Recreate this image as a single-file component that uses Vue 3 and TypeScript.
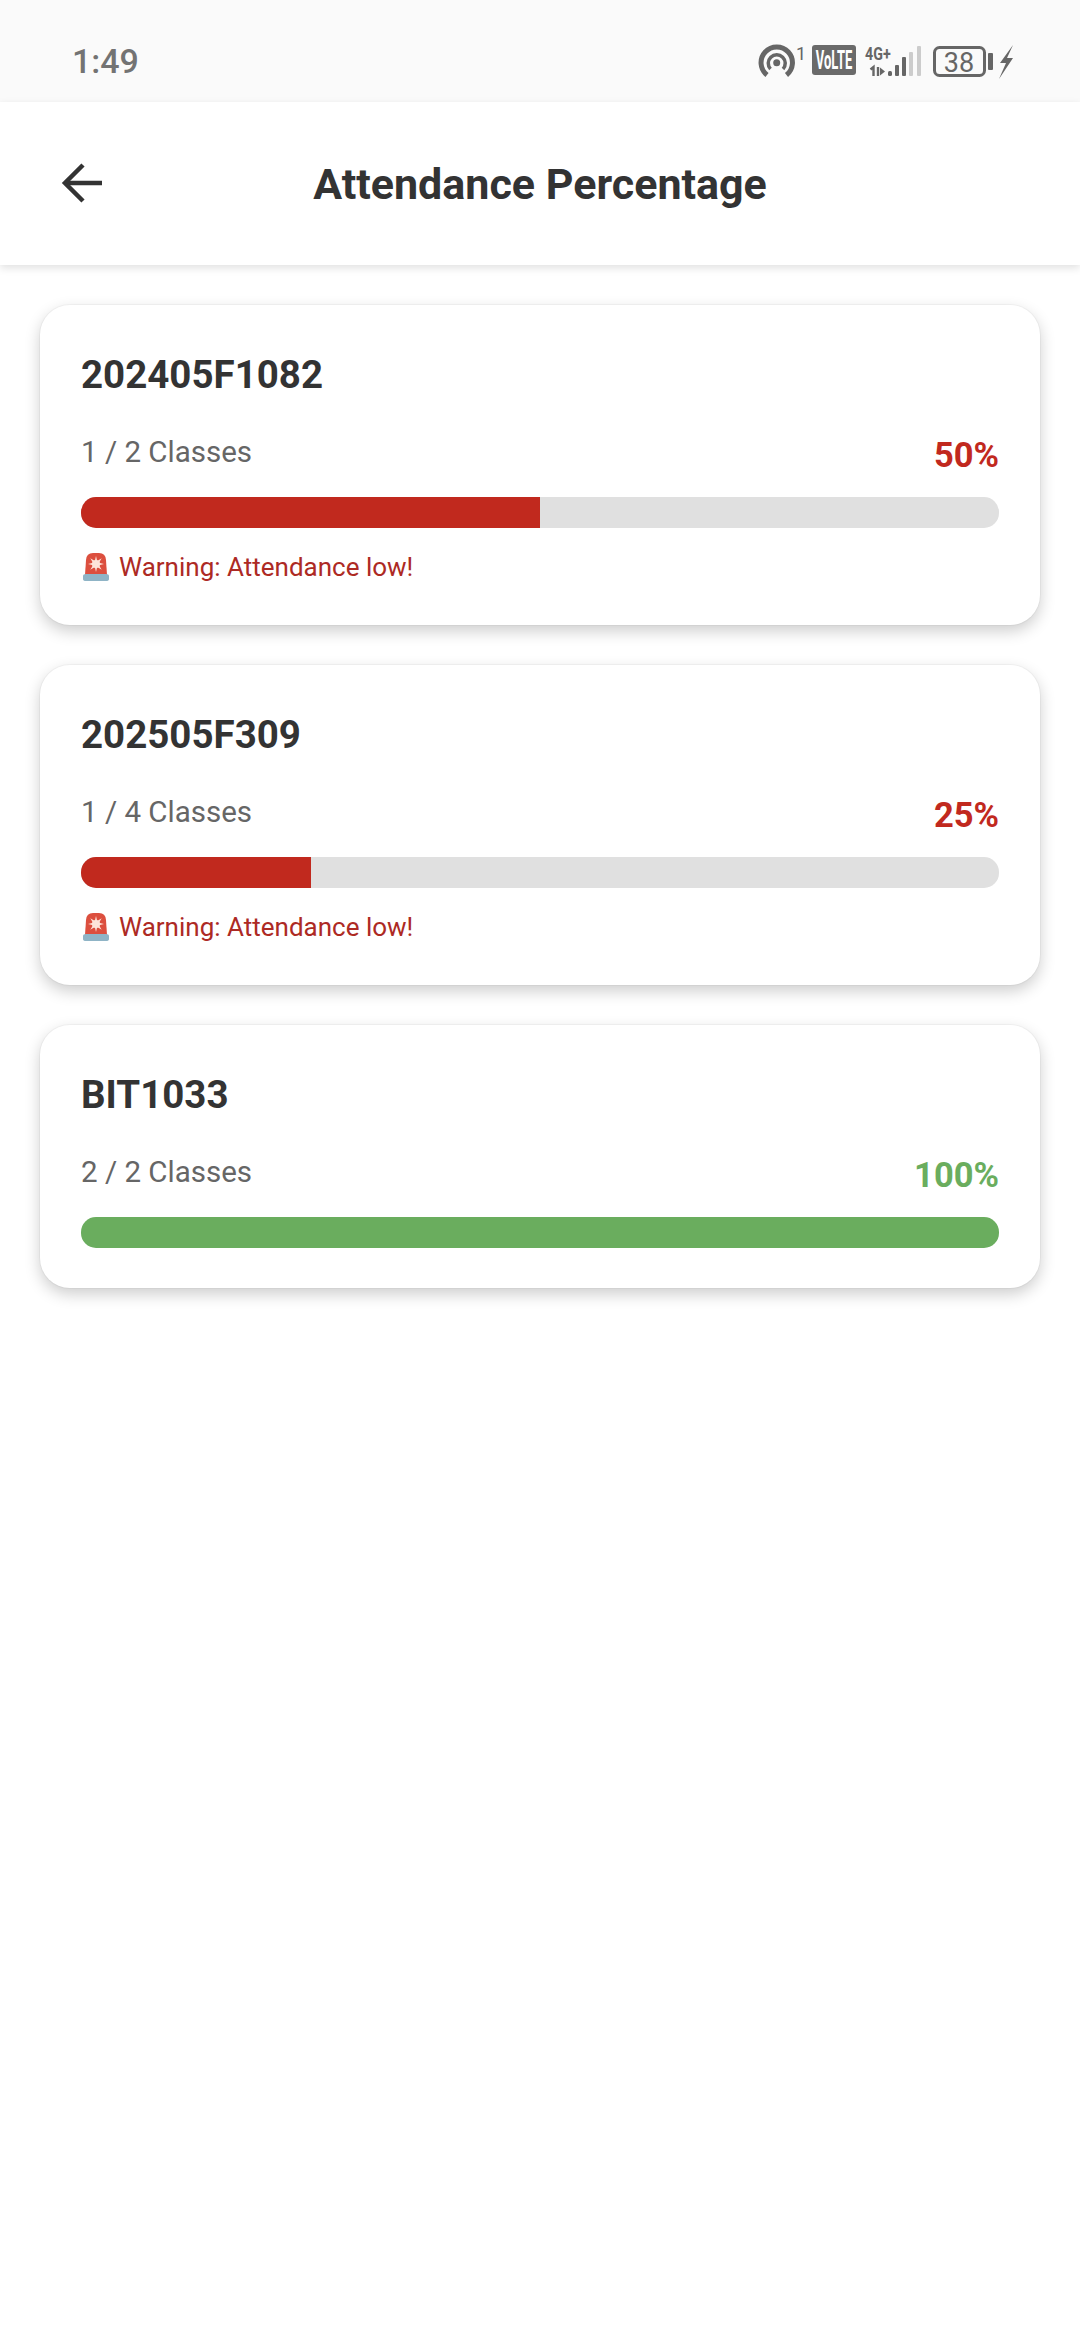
<script setup lang="ts">
interface Course {
  code: string;
  attended: number;
  total: number;
}

const courses: Course[] = [
  { code: '202405F1082', attended: 1, total: 2 },
  { code: '202505F309', attended: 1, total: 4 },
  { code: 'BIT1033', attended: 2, total: 2 },
];

const percent = (c: Course) => Math.round((c.attended / c.total) * 100);
const isLow = (c: Course) => percent(c) < 75;
</script>

<template>
  <div class="page">
    <div class="status-bar">
      <span class="clock">1:49</span>
      <div class="status-icons">
        <svg class="ic-cast" width="50" height="44" viewBox="0 0 50 44" fill="none" stroke="#666">
          <path d="M11 37A15.700 15.700 0 1 1 30.500 37" stroke-width="5" />
          <path d="M14.500 31A8.500 8.500 0 1 1 27 31" stroke-width="3.500" />
          <circle cx="20.700" cy="24.700" r="3.500" fill="#666" stroke="none" />
          <text x="40" y="22" class="tiny" fill="#666" stroke="none">1</text>
        </svg>
        <svg class="ic-volte" width="44" height="44" viewBox="0 0 44 44">
          <rect y="7" width="44" height="30" rx="3" fill="#6a6a6a" />
          <text transform="translate(22 31) scale(.52 1)" text-anchor="middle" class="volte">VoLTE</text>
        </svg>
        <svg class="ic-signal" width="58" height="44" viewBox="0 0 58 44">
          <text transform="translate(1 22) scale(.75 1)" class="net">4G+</text>
          <path d="M9.500 38V29L6.500 31.500" stroke="#666" stroke-width="2.400" fill="none" />
          <path d="M14 29V38" stroke="#666" stroke-width="2.400" />
          <path d="M16 29.500L21 33.500L16 37.500Z" fill="#666" />
          <rect x="24" y="33" width="4" height="5" rx="1.500" fill="#666" />
          <rect x="31" y="27" width="4" height="11" rx="1" fill="#666" />
          <rect x="38" y="19" width="4" height="19" rx="1" fill="#666" />
          <rect x="45" y="14" width="4" height="24" rx="1" fill="#ccc" />
          <rect x="53" y="8" width="4" height="30" rx="1" fill="#ccc" />
        </svg>
        <svg class="ic-battery" width="61" height="44" viewBox="0 0 61 44">
          <rect x="1.500" y="9.500" width="50" height="28" rx="5" fill="none" stroke="#666" stroke-width="3" />
          <text x="26" y="33.500" text-anchor="middle" class="batt">38</text>
          <rect x="55" y="15" width="5" height="17" rx="1" fill="#666" />
        </svg>
        <svg class="ic-bolt" width="16" height="44" viewBox="0 0 16 44">
          <path d="M15 7L2 25H8L1 41L15 20H9Z" fill="#666" />
        </svg>
      </div>
    </div>

    <header class="app-bar">
      <button class="back" aria-label="Back">
        <svg width="44" height="44" viewBox="0 0 44 44" fill="none" stroke="#333" stroke-width="4.500">
          <path d="M42 22H5" />
          <path d="M23 4L5 22L23 40" />
        </svg>
      </button>
      <h1 class="title">Attendance Percentage</h1>
    </header>

    <main class="list">
      <section v-for="c in courses" :key="c.code" class="card">
        <h2 class="code">{{ c.code }}</h2>
        <div class="meta">
          <span class="classes">{{ c.attended }} / {{ c.total }} Classes</span>
          <span class="pct" :class="isLow(c) ? 'low' : 'ok'">{{ percent(c) }}%</span>
        </div>
        <div class="track">
          <div class="fill" :class="isLow(c) ? 'low' : 'ok'" :style="{ width: percent(c) + '%' }"></div>
        </div>
        <p v-if="isLow(c)" class="warning">
          <svg class="siren" width="30" height="30" viewBox="0 0 30 30">
            <path d="M4 23L5 8Q5.500 1 12 1H18Q24.500 1 25 8L26 23Z" fill="#dc4f3e" />
            <polygon points="15,4 16.200,9 20.700,6.300 18,10.800 23,12 18,13.200 20.700,17.700 16.200,15 15,20 13.800,15 9.300,17.700 12,13.200 7,12 12,10.800 9.300,6.300 13.800,9" fill="#fde5da" />
            <circle cx="15" cy="12" r="4" fill="#fde5da" />
            <path d="M2 24Q2 22 5 22H25Q28 22 28 24V27Q28 29 25 29H5Q2 29 2 27Z" fill="#8fb4c6" />
          </svg>
          <span>Warning: Attendance low!</span>
        </p>
      </section>
    </main>
  </div>
</template>

<style scoped>
.page {
  min-height: 2340px;
  background: #fff;
  font-family: Roboto, "Liberation Sans", sans-serif;
}

.status-bar {
  height: 102px;
  background: #fafafa;
  display: flex;
  align-items: center;
  justify-content: space-between;
  padding: 18px 66px 0 72px;
  box-sizing: border-box;
}

.clock {
  font-size: 34px;
  font-weight: 500;
  color: #737373;
  margin-top: 2px;
}

.status-icons {
  display: flex;
  align-items: center;
}

.ic-volte { margin-left: 6px; }
.ic-signal { margin-left: 8px; }
.ic-battery { margin-left: 11px; }
.ic-bolt { margin-left: 4px; }

.tiny {
  font-size: 18px;
  font-family: Roboto, sans-serif;
}

.volte {
  font-size: 25px;
  font-weight: 700;
  fill: #fff;
  font-family: Roboto, sans-serif;
}

.net {
  font-size: 19px;
  font-weight: 700;
  fill: #666;
  font-family: Roboto, sans-serif;
}

.batt {
  font-size: 27px;
  fill: #666;
  font-family: Roboto, sans-serif;
}

.app-bar {
  position: relative;
  height: 163px;
  background: #fff;
  display: flex;
  align-items: center;
  justify-content: center;
  box-shadow: 0 3px 8px rgba(0, 0, 0, 0.12);
}

/* back arrow sits over the centred title row */
.back {
  position: absolute;
  left: 60px;
  top: 59px;
  padding: 0;
  border: none;
  background: none;
  line-height: 0;
}

.title {
  margin: 0;
  font-size: 43px;
  font-weight: 700;
  color: #333;
}

.list {
  display: flex;
  flex-direction: column;
  gap: 40px;
  padding: 40px 40px 0;
}

.card {
  background: #fff;
  border-radius: 30px;
  padding: 47px 41px 40px;
  box-shadow: 0 0 0 1px rgba(0, 0, 0, 0.03), 0 6px 16px rgba(0, 0, 0, 0.2);
}

.code {
  margin: 0;
  font-size: 38.500px;
  line-height: 46px;
  font-weight: 700;
  color: #333;
}

.meta {
  display: flex;
  justify-content: space-between;
  margin-top: 34px;
  height: 49px;
}

.classes {
  font-size: 29.500px;
  line-height: 40px;
  color: #666;
}

.pct {
  font-size: 34.500px;
  line-height: 40px;
  font-weight: 700;
  margin-top: 3px;
}

.track {
  height: 31px;
  margin-top: 16px;
  border-radius: 15px;
  background: #e0e0e0;
  overflow: hidden;
}

.fill {
  height: 100%;
}

.fill.low { background: #c1291e; }
.fill.ok { background: #6aad5e; }
.pct.low { color: #c1291e; }
.pct.ok { color: #6aad5e; }

.warning {
  display: flex;
  align-items: center;
  gap: 8px;
  margin: 21px 0 0;
  font-size: 26px;
  line-height: 36px;
  color: #ad2a24;
}

.siren {
  flex-shrink: 0;
}
</style>
